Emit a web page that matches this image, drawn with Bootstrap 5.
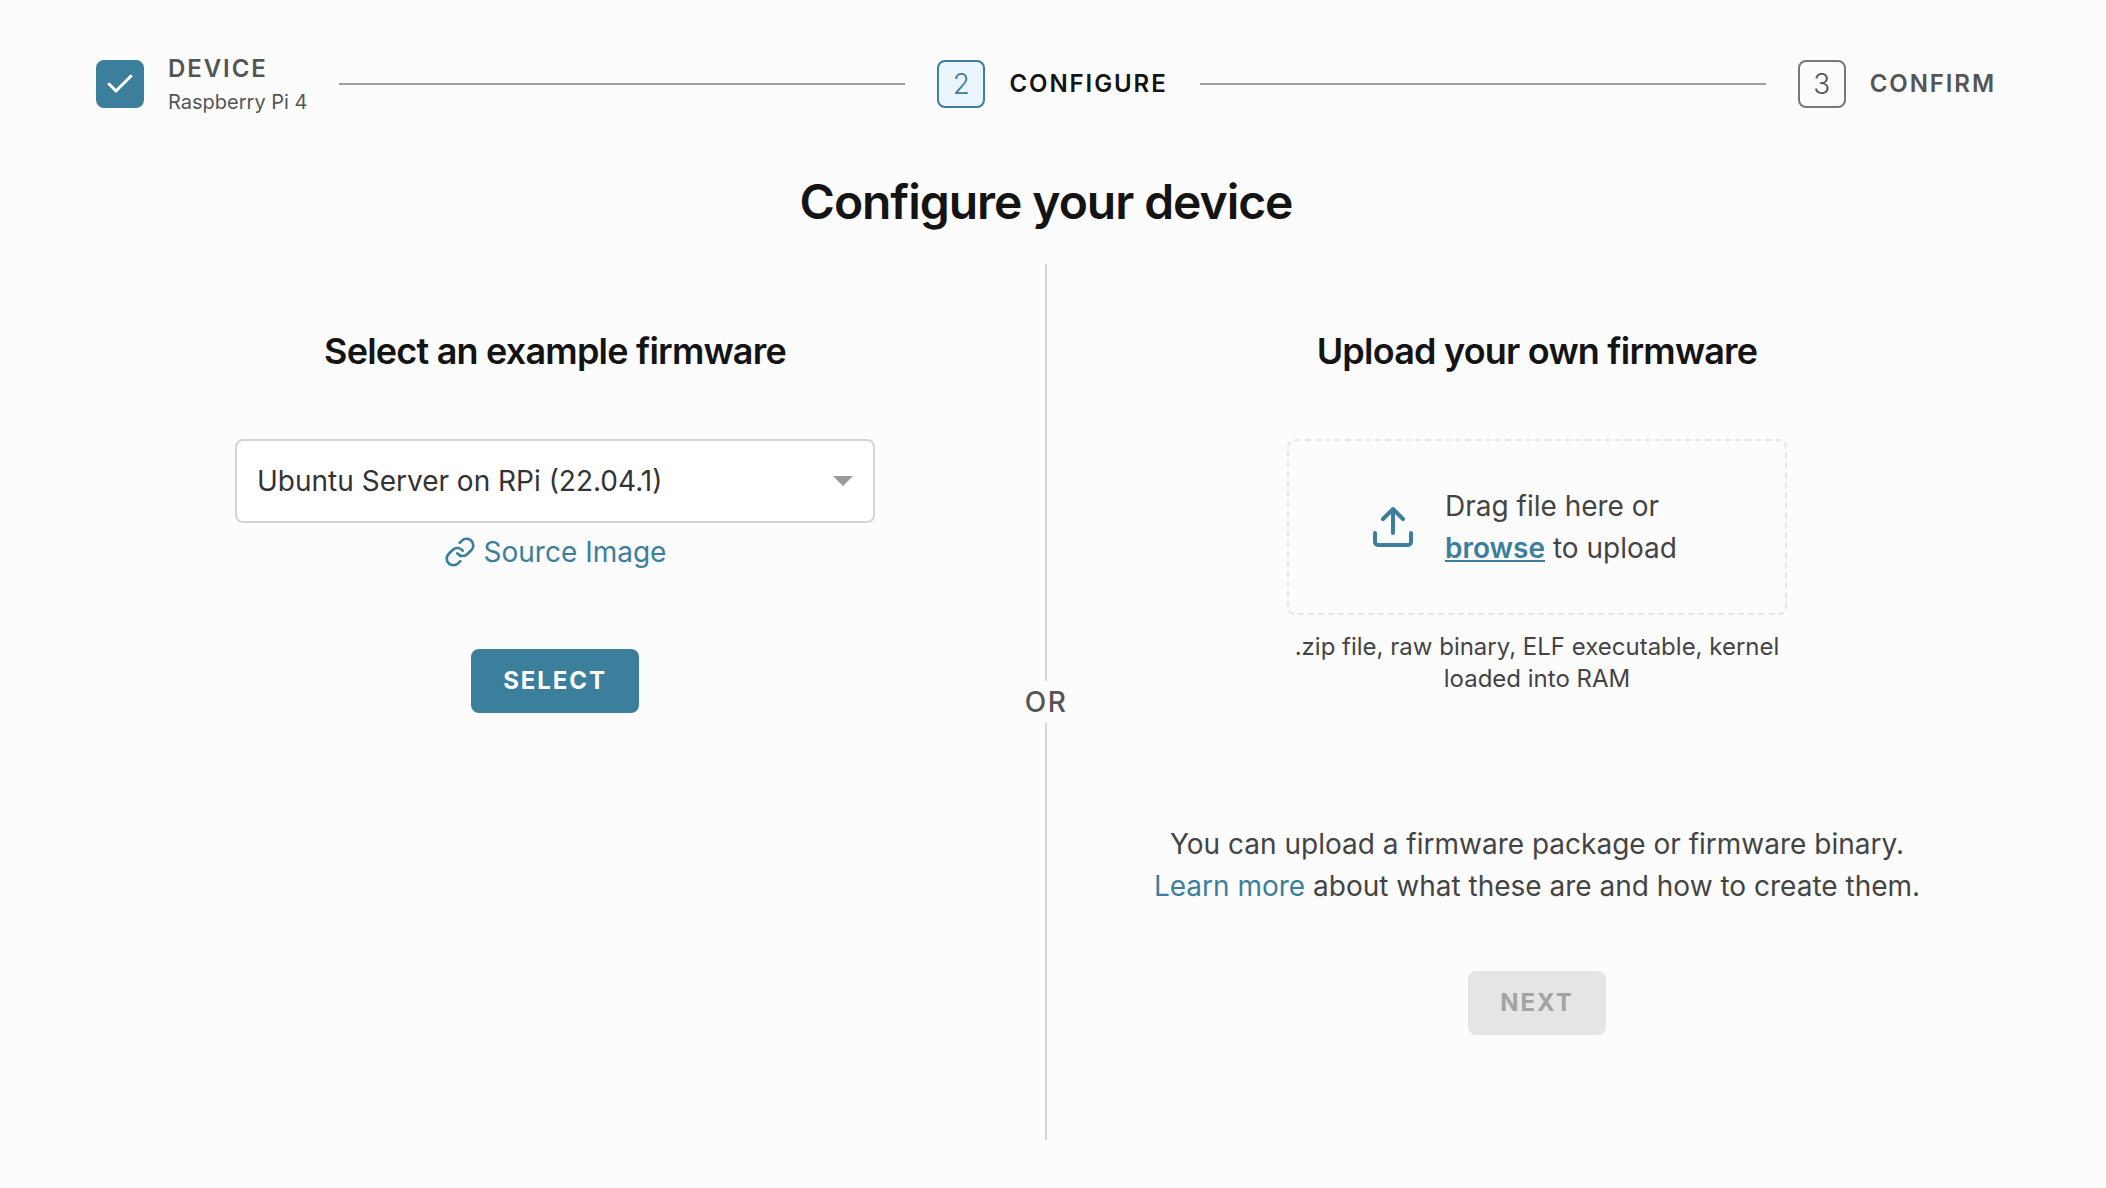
<!DOCTYPE html>
<html lang="en">
<head>
<meta charset="utf-8">
<meta name="viewport" content="width=device-width, initial-scale=1">
<title>Configure your device</title>
<link href="https://cdn.jsdelivr.net/npm/bootstrap@5.3.0/dist/css/bootstrap.min.css" rel="stylesheet">
<style>
:root { --brand: #3c7f9c; --ink: #141414; --muted: #555555; }
body { font-family: Inter, "Liberation Sans", sans-serif; font-size: 28px; line-height: 42px; color: #444444; background: #fcfcfc; }
a { color: var(--brand); text-decoration: none; }
.page { padding: 48px 78px 48px 64px; }
.stepper { padding: 0 32px; gap: 32px; height: 72px; }
.step { gap: 24px; color: var(--muted); }
.step-box { width: 48px; height: 48px; border: 2px solid #777777; border-radius: 8px; font-weight: 300; }
.step-name { font-size: 24px; line-height: 32px; font-weight: 600; letter-spacing: 0.08em; }
.step-note { font-size: 20px; line-height: 28px; margin-top: 3px; }
.step-done .step-box { background: var(--brand); border-color: var(--brand); color: #fff; }
.step-active { color: var(--ink); }
.step-active .step-box { background: #eaf5fe; border-color: var(--brand); color: var(--brand); }
.step-line { height: 2px; background: #9e9e9e; }
h1, h2 { color: var(--ink); font-weight: 600; letter-spacing: -0.022em; }
h1 { font-size: 48px; line-height: 64px; margin: 50px 0 30px; }
h2 { font-size: 36px; line-height: 48px; margin: 63px 0 64px; }
.choice { flex: 1 1 0; min-width: 0; }
.rule { width: 2px; background: #d4d4d4; }
.divider { width: 0; }
.or-text { color: var(--muted); font-weight: 500; letter-spacing: 0.05em; }
.firmware { width: 640px; max-width: 100%; height: 84px; padding: 0 64px 0 20px; border: 2px solid #d4d4d4; border-radius: 8px; font-size: 28px; color: #333333; background-size: 20px 10px; background-position: right 20px center;
 background-image: url("data:image/svg+xml,%3csvg xmlns='http://www.w3.org/2000/svg' viewBox='0 0 20 10'%3e%3cpath fill='%23999' d='M0 0h20L10 10z'/%3e%3c/svg%3e"); }
.source { gap: 8px; margin: 8px 0 76px; }
.action { height: 64px; padding: 0 32px; border: 0; border-radius: 8px; font-size: 24px; font-weight: 700; letter-spacing: 0.08em; background: var(--brand); color: #fff; }
.action:disabled { background: #e5e5e5; color: #a3a3a3; opacity: 1; }
.dropzone { width: 500px; max-width: 100%; height: 176px; padding: 0 80px; gap: 28px; border: 2px dashed #e5e5e5; border-radius: 8px; }
.browse { font-weight: 600; text-decoration: underline; }
.formats { width: 500px; max-width: 100%; font-size: 24px; line-height: 32px; margin: 16px 0 128px; }
.help { margin-bottom: 64px; }
</style>
</head>
<body>
<main class="page min-vh-100 d-flex flex-column">
  <nav class="stepper d-flex align-items-center" aria-label="Progress">
    <div class="step step-done d-flex align-items-center">
      <span class="step-box d-flex align-items-center justify-content-center">
        <svg width="28" height="28" viewBox="0 0 28 28" fill="none" stroke="currentColor" stroke-width="3" stroke-linecap="round" stroke-linejoin="round" aria-hidden="true"><path d="M3 14l7 7L25 6"/></svg>
      </span>
      <div><div class="step-name">DEVICE</div><div class="step-note">Raspberry Pi 4</div></div>
    </div>
    <div class="step-line flex-grow-1"></div>
    <div class="step step-active d-flex align-items-center" aria-current="step">
      <span class="step-box d-flex align-items-center justify-content-center">2</span>
      <div class="step-name">CONFIGURE</div>
    </div>
    <div class="step-line flex-grow-1"></div>
    <div class="step d-flex align-items-center">
      <span class="step-box d-flex align-items-center justify-content-center">3</span>
      <div class="step-name">CONFIRM</div>
    </div>
  </nav>

  <h1 class="text-center">Configure your device</h1>

  <div class="d-flex flex-grow-1">
    <section class="choice d-flex flex-column align-items-center">
      <h2><label for="firmware">Select an example firmware</label></h2>
      <select id="firmware" class="form-select firmware">
        <option>Ubuntu Server on RPi (22.04.1)</option>
      </select>
      <a href="#" class="source d-flex align-items-center">
        <svg width="32" height="32" viewBox="0 0 24 24" fill="none" stroke="currentColor" stroke-width="2" stroke-linecap="round" stroke-linejoin="round" aria-hidden="true"><path d="M10 13a5 5 0 0 0 7.540.540l3-3a5 5 0 0 0-7.070-7.070l-1.720 1.710"/><path d="M14 11a5 5 0 0 0-7.540-.540l-3 3a5 5 0 0 0 7.070 7.070l1.710-1.710"/></svg>
        Source Image
      </a>
      <button type="button" class="btn action">SELECT</button>
    </section>

    <div class="divider d-flex flex-column align-items-center">
      <div class="rule flex-grow-1"></div>
      <div class="or-text">OR</div>
      <div class="rule flex-grow-1"></div>
    </div>

    <section class="choice d-flex flex-column align-items-center">
      <h2>Upload your own firmware</h2>
      <div class="dropzone d-flex align-items-center">
        <svg class="flex-shrink-0" width="48" height="48" viewBox="0 0 48 48" fill="none" stroke="#3c7f9c" stroke-width="4" stroke-linecap="round" stroke-linejoin="round" aria-hidden="true"><path d="M6 30v9a3 3 0 0 0 3 3h30a3 3 0 0 0 3-3V30M24 30V6M14 16L24 6l10 10"/></svg>
        <div>Drag file here or<br><a href="#" class="browse">browse</a> to upload</div>
      </div>
      <p class="formats text-center">.zip file, raw binary, ELF executable, kernel loaded into RAM</p>
      <p class="help text-center">You can upload a firmware package or firmware binary.<br><a href="#">Learn more</a> about what these are and how to create them.</p>
      <button type="button" class="btn action" disabled>NEXT</button>
    </section>
  </div>
</main>
<script src="https://cdn.jsdelivr.net/npm/bootstrap@5.3.0/dist/js/bootstrap.bundle.min.js"></script>
</body>
</html>
